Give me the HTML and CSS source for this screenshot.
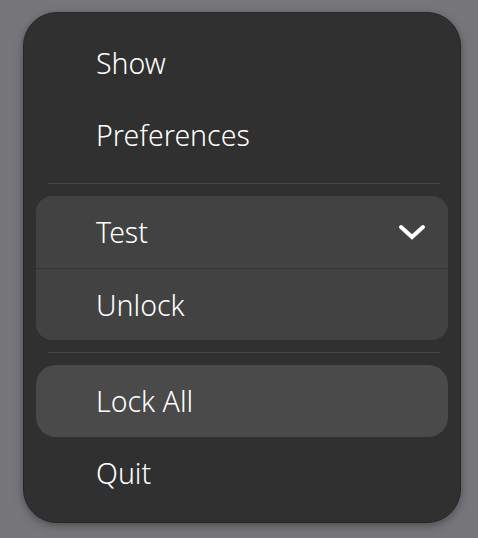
FILE: index.html
```html
<!DOCTYPE html>
<html>
<head>
<meta charset="utf-8">
<link rel="stylesheet" href="styles.css">
</head>
<body>
<div class="stage">
  <div class="popover">
    <div class="item">Show</div>
    <div class="item">Preferences</div>
    <div class="sep"></div>
    <div class="group">
      <div class="item item-sub">
        <span>Test</span>
        <svg class="chev" width="28" height="18" viewBox="0 0 28 18"><polyline points="3,4 14,14 25,4" fill="none" stroke="#fff" stroke-width="4" stroke-linecap="round" stroke-linejoin="miter"/></svg>
      </div>
      <div class="item item-inner">Unlock</div>
    </div>
    <div class="sep"></div>
    <div class="item item-hover">Lock All</div>
    <div class="item">Quit</div>
  </div>
</div>
</body>
</html>
```
FILE: styles.css
```css
html, body {
  margin: 0;
  padding: 0;
  background: #77767b;
  width: 478px;
  height: 538px;
  overflow: hidden;
}
.stage {
  padding: 12px 0 0 23px;
}
.popover {
  box-sizing: border-box;
  width: 438px;
  height: 511px;
  background: #303030;
  border: 1px solid #262626;
  border-radius: 34px;
  padding: 14px 12px 13px 12px;
  box-shadow: 0 2px 6px rgba(0,0,0,0.25), 0 4px 14px rgba(0,0,0,0.12);
  font-family: "Noto Sans", sans-serif;
  font-size: 28.5px;
  font-weight: 350;
  color: #ffffff;
  display: flex;
  flex-direction: column;
}
.item {
  height: 72px;
  display: flex;
  align-items: center;
  padding-left: 60px;
  padding-right: 22px;
  box-sizing: border-box;
  border-radius: 20px;
}
.item-sub {
  justify-content: space-between;
  border-radius: 0;
}
.item-inner {
  height: 72px;
  border-radius: 0;
  border-top: 1px solid #333333;
}
.chev {
  display: block;
}
.sep {
  height: 1px;
  background: #474747;
  margin: 12px 8px 12px 12px;
  flex: none;
}
.group {
  background: #424242;
  border-radius: 16px;
  overflow: hidden;
}
.item-hover {
  background: #4a4a4a;
}
```
